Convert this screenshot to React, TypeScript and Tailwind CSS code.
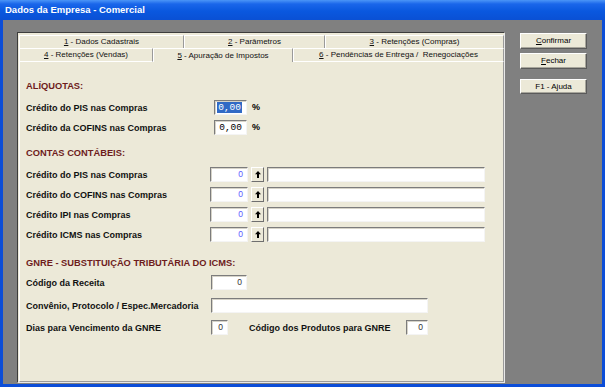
import React from "react";

const Field = ({
  w,
  h = 15,
  value = "",
  color = "text-black",
  mono = false,
  selected = false,
}: {
  w: number;
  h?: number;
  value?: string;
  color?: string;
  mono?: boolean;
  selected?: boolean;
}) => (
  <div
    className={`bg-white border-t border-l border-[#7c7c7c] border-r border-b border-r-[#f4f4f4] border-b-[#f4f4f4] shadow-[inset_1px_1px_0_#d6d3c8] flex items-center justify-end pr-[4px] ${color} ${
      mono ? "font-['Liberation_Mono',monospace] text-[9.5px]" : "text-[8.5px]"
    }`}
    style={{ width: w, height: h }}
  >
    {selected ? (
      <span className="bg-[#316ac5] text-white leading-[11px] px-[1px]">{value}</span>
    ) : (
      <span className="leading-[11px]">{value}</span>
    )}
  </div>
);

const ArrowBtn = () => (
  <div className="w-[13px] h-[15px] bg-[#ece9d8] border border-t-white border-l-white border-r-[#6f6f6f] border-b-[#6f6f6f] flex items-center justify-center">
    <svg width="6" height="7" viewBox="0 0 6 7">
      <path d="M3 0 L6 3.2 L4 3.2 L4 7 L2 7 L2 3.2 L0 3.2 Z" fill="#000" />
    </svg>
  </div>
);

const Tab = ({
  w,
  children,
  selected = false,
  bottom = false,
}: {
  w: number;
  children: React.ReactNode;
  selected?: boolean;
  bottom?: boolean;
}) => (
  <div
    className={`h-full flex items-center justify-center border-t border-l border-white border-r border-r-[#9a9a9a] text-[8px] text-[#111] bg-[#ece9d8] ${
      bottom && !selected ? "border-b border-b-white" : ""
    }`}
    style={{ width: w }}
  >
    {children}
  </div>
);

const Label = ({ w, children }: { w: number; children: React.ReactNode }) => (
  <div className="text-[9px] font-bold text-[#111] leading-[12px] shrink-0" style={{ width: w }}>
    {children}
  </div>
);

const Heading = ({ children }: { children: React.ReactNode }) => (
  <div className="text-[9.3px] font-bold text-[#6e1c1c] leading-[12px] h-[12px]">{children}</div>
);

const Button = ({ h, children }: { h: number; children: React.ReactNode }) => (
  <div
    className="w-[67px] bg-[#ece9d8] border border-t-white border-l-white border-r-[#5a5a5a] border-b-[#5a5a5a] shadow-[inset_-1px_-1px_0_#a8a69c] flex items-center justify-center text-[8px] text-black"
    style={{ height: h }}
  >
    {children}
  </div>
);

export default function App() {
  return (
    <div className="w-[605px] h-[387px] bg-[#0b4dd8] flex flex-col font-['Liberation_Sans',Arial,sans-serif] overflow-hidden">
      <div className="h-[20px] shrink-0 bg-[linear-gradient(to_bottom,#4b95f7_0%,#1a66ea_20%,#0a58df_55%,#0a50d4_100%)] flex items-center pl-[5px]">
        <span className="text-white font-bold text-[9.5px] leading-none">Dados da Empresa - Comercial</span>
      </div>
      <div className="flex-1 flex px-[3px] pb-[3px]">
        <div className="flex-1 bg-[#808080] flex pl-[14px] pt-[12px] gap-[15px]">
          {/* Panel */}
          <div className="w-[488px] h-[351px] bg-[#ece9d8] border-t border-l border-[#3c3c3c] border-r border-b border-r-[#e8e8e8] border-b-[#e8e8e8] pl-[1px] pt-[2px] flex flex-col">
            <div className="w-[485px] flex-1 flex flex-col">
              <div className="h-[13px] flex">
                <Tab w={165}>
                  <span>
                    <span className="underline">1</span> - Dados Cadastrais
                  </span>
                </Tab>
                <Tab w={141}>
                  <span>
                    <span className="underline">2</span> - Parâmetros
                  </span>
                </Tab>
                <Tab w={179}>
                  <span>
                    <span className="underline">3</span> - Retenções (Compras)
                  </span>
                </Tab>
              </div>
              <div className="h-[14px] flex">
                <Tab w={134} bottom>
                  <span>
                    <span className="underline">4</span> - Retenções (Vendas)
                  </span>
                </Tab>
                <Tab w={140} bottom selected>
                  <span>
                    <span className="underline">5</span> - Apuração de Impostos
                  </span>
                </Tab>
                <Tab w={211} bottom>
                  <span>
                    <span className="underline">6</span> - Pendências de Entrega / &nbsp;Renegociações
                  </span>
                </Tab>
              </div>
              <div className="flex-1 border-l border-white border-r border-r-[#9a9a9a] border-b border-b-[#9a9a9a] pl-[6px] pt-[18px] flex flex-col">
                <Heading>ALÍQUOTAS:</Heading>
                <div className="flex items-center mt-[8px] h-[15px]">
                  <Label w={188}>Crédito do PIS nas Compras</Label>
                  <Field w={33} value="0,00" mono selected />
                  <span className="ml-[5px] text-[9px] font-bold leading-none">%</span>
                </div>
                <div className="flex items-center mt-[5px] h-[15px]">
                  <Label w={188}>Crédito da COFINS nas Compras</Label>
                  <Field w={33} value="0,00" mono />
                  <span className="ml-[5px] text-[9px] font-bold leading-none">%</span>
                </div>

                <div className="mt-[12px]">
                  <Heading>CONTAS CONTÁBEIS:</Heading>
                </div>
                {[
                  "Crédito do PIS nas Compras",
                  "Crédito do COFINS nas Compras",
                  "Crédito IPI nas Compras",
                  "Crédito ICMS nas Compras",
                ].map((t, i) => (
                  <div key={t} className={`flex items-center h-[15px] ${i === 0 ? "mt-[8px]" : "mt-[5px]"}`}>
                    <Label w={184}>{t}</Label>
                    <Field w={38} value="0" color="text-[#5a5aff]" />
                    <div className="ml-[3px]">
                      <ArrowBtn />
                    </div>
                    <div className="ml-[3px]">
                      <Field w={218} />
                    </div>
                  </div>
                ))}

                <div className="mt-[15px]">
                  <Heading>GNRE - SUBSTITUIÇÃO TRIBUTÁRIA DO ICMS:</Heading>
                </div>
                <div className="flex items-center h-[15px] mt-[6px]">
                  <Label w={185}>Código da Receita</Label>
                  <Field w={36} value="0" color="text-[#333]" />
                </div>
                <div className="flex items-center h-[15px] mt-[8px]">
                  <Label w={185}>Convênio, Protocolo / Espec.Mercadoria</Label>
                  <Field w={217} />
                </div>
                <div className="flex items-center h-[15px] mt-[7px]">
                  <Label w={185}>Dias para Vencimento da GNRE</Label>
                  <Field w={17} value="0" color="text-[#333]" />
                  <div className="ml-[21px]">
                    <Label w={157}>Código dos Produtos para GNRE</Label>
                  </div>
                  <Field w={22} value="0" color="text-[#333]" />
                </div>
              </div>
            </div>
          </div>
          {/* Buttons */}
          <div className="flex flex-col mt-[1px]">
            <Button h={16}>
              <span>
                <span className="underline">C</span>onfirmar
              </span>
            </Button>
            <div className="mt-[4px]">
              <Button h={16}>
                <span>
                  <span className="underline">F</span>echar
                </span>
              </Button>
            </div>
            <div className="mt-[10px]">
              <Button h={15}>F1 - Ajuda</Button>
            </div>
          </div>
        </div>
      </div>
    </div>
  );
}
